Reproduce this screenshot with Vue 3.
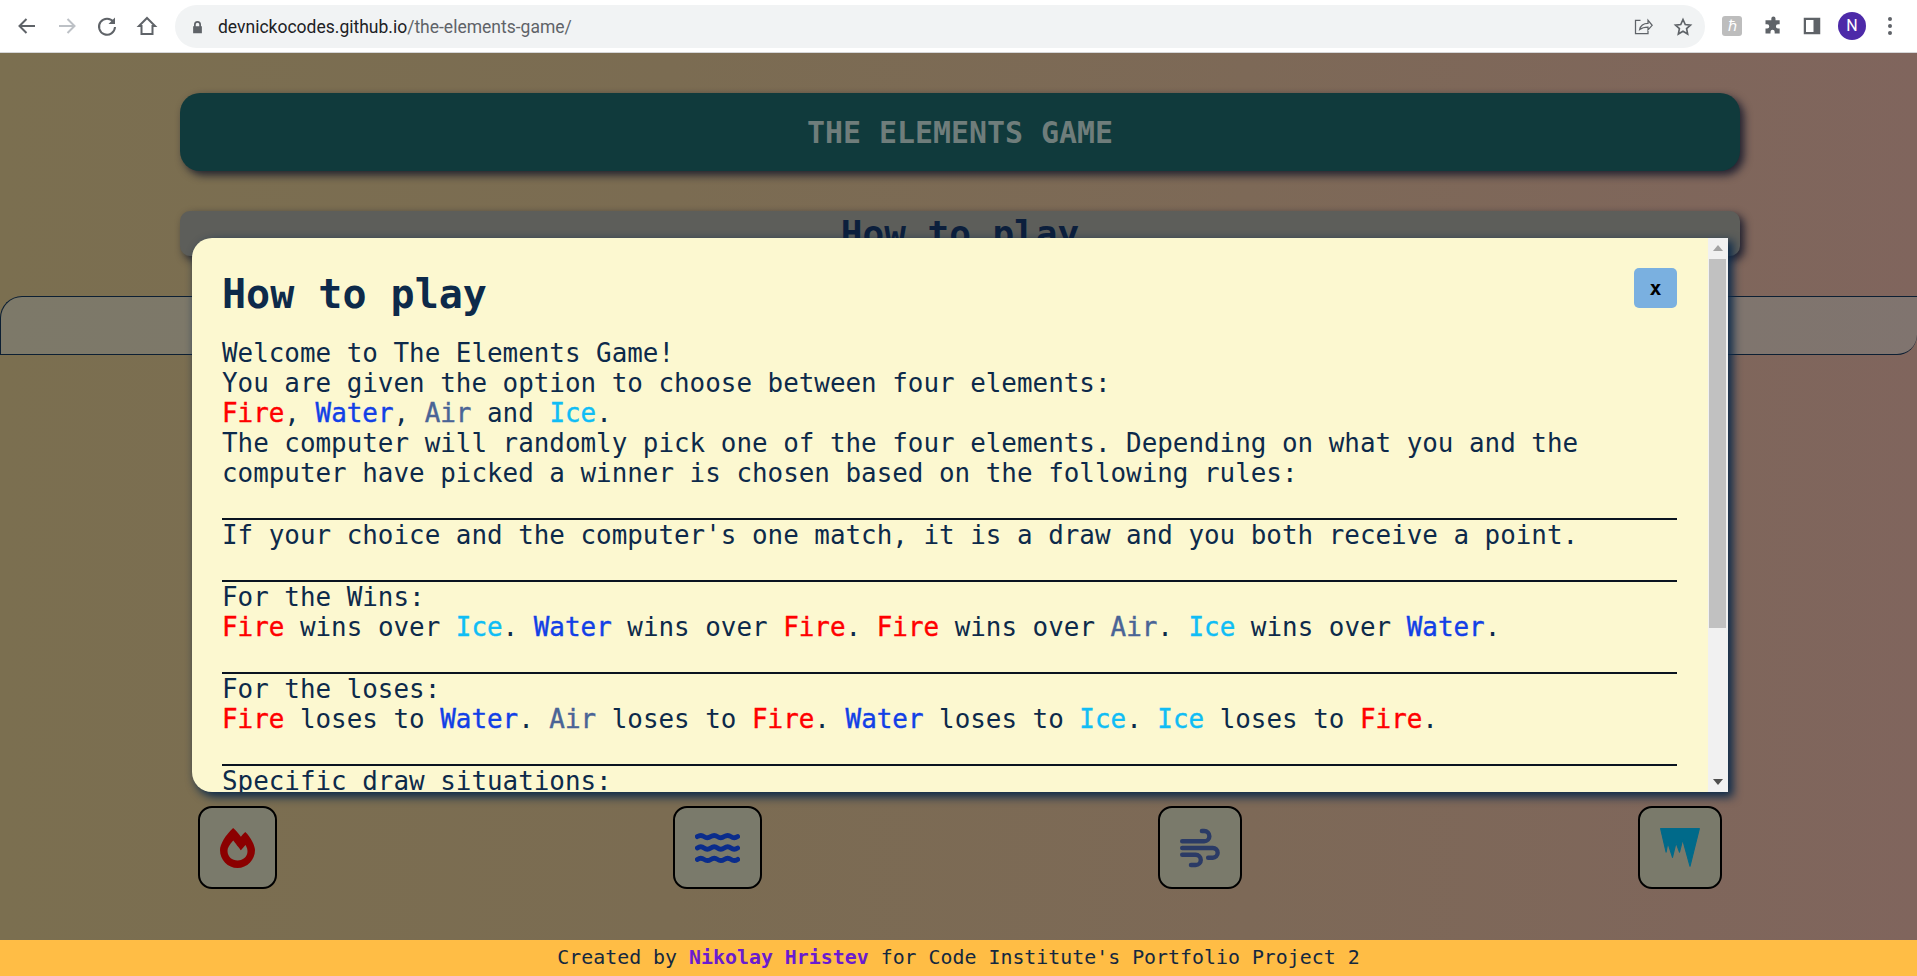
<script setup>
const choices = [
  { id: 'fire', vb: '0 0 448 512', w: 35 },
  { id: 'water', vb: '0 0 576 512', w: 45 },
  { id: 'air', vb: '0 0 512 512', w: 40 },
  { id: 'ice', vb: '0 0 512 512', w: 40 }
]
</script>

<template>
  <div class="browser">
    <div class="chrome">
      <div class="nav-icons">
        <svg class="nav-icon" viewBox="0 0 24 24"><path d="M20 12H5M11.500 5L4.500 12l7 7" /></svg>
        <svg class="nav-icon off" viewBox="0 0 24 24"><path d="M4 12h15M12.500 5l7 7-7 7" /></svg>
        <svg class="nav-icon" viewBox="0 0 24 24"><path d="M18.500 8A8 8 0 1 0 20 13" /><path class="fill" d="M20 3.500V10h-6.500z" /></svg>
        <svg class="nav-icon" viewBox="0 0 24 24"><path d="M12 4l8 8h-2.500v8h-11v-8H4z" /></svg>
      </div>
      <div class="omnibox">
        <svg class="lock" viewBox="0 0 12 16"><path d="M2 7V5a4 4 0 0 1 8 0v2h1v8H1V7zm2 0h4V5a2 2 0 0 0-4 0z" /></svg>
        <span class="url">devnickocodes.github.io<span class="url-path">/the-elements-game/</span></span>
        <svg class="omni-icon share" viewBox="0 0 24 24"><path d="M9 4H3v16h15v-5M8 15c1-5 5-7.500 10-7.500V4l5 6-5 5.500V12c-4 0-7 .5-10 3z" /></svg>
        <svg class="omni-icon" viewBox="0 0 24 24"><path d="M12 3l2.700 6 6.300.7-4.700 4.300 1.300 6.500-5.600-3.300-5.600 3.300L7.700 14 3 9.700 9.300 9z" /></svg>
      </div>
      <div class="ext-icons">
        <div class="ext-badge">ℏ</div>
        <svg class="ext-icon" viewBox="0 0 24 24"><path d="M10 3a2.500 2.500 0 0 1 5 0v2h5v5h-2a2.500 2.500 0 0 0 0 5h2v6h-6v-2a2.500 2.500 0 0 0-5 0v2H3v-6h2a2.500 2.500 0 0 0 0-5H3V5h7z" /></svg>
        <svg class="ext-icon" viewBox="0 0 24 24"><path fill-rule="evenodd" d="M1 1h22v22H1zm3 3v16h10V4z" /></svg>
        <div class="avatar">N</div>
        <div class="menu-dots"><i></i><i></i><i></i></div>
      </div>
    </div>

    <div class="page">
      <header class="title-bar"><h1>THE ELEMENTS GAME</h1></header>
      <div class="how-bar"><h2>How to play</h2></div>
      <div class="band"></div>

      <div class="choices">
        <button v-for="c in choices" :key="c.id" class="choice">
          <svg :viewBox="c.vb" :width="c.w" height="40">
            <path v-if="c.id === 'fire'" fill="#8b0000" d="M323.56 51.2c-20.8 19.3-39.58 39.59-56.22 59.97C240.08 73.62 206.28 35.53 168 0 69.74 91.17 0 209.96 0 281.6 0 408.85 100.29 512 224 512s224-103.15 224-230.4c0-53.27-51.98-163.14-124.44-230.4zm-19.47 340.65C282.43 407.01 255.72 416 226.86 416 154.71 416 96 368.26 96 290.75c0-38.61 24.31-72.63 72.79-130.75 6.93 7.98 98.83 125.34 98.83 125.34l58.63-66.88c4.14 6.85 7.91 13.55 11.27 19.97 27.35 52.19 15.81 118.97-33.43 153.42z" />
            <g v-else-if="c.id === 'water'" fill="none" stroke="#0a2c8c" stroke-width="62" stroke-linecap="round">
              <path d="M30 110q45 -30 86 0t86 0t86 0t86 0t86 0t86 0" />
              <path d="M30 256q45 -30 86 0t86 0t86 0t86 0t86 0t86 0" />
              <path d="M30 402q45 -30 86 0t86 0t86 0t86 0t86 0t86 0" />
            </g>
            <g v-else-if="c.id === 'air'" fill="none" stroke="#2b3b66" stroke-width="56" stroke-linecap="round" stroke-linejoin="round">
              <path d="M28 170H310a66 66 0 0 0 0-132h-30" />
              <path d="M28 256H420a62 62 0 0 1 0 124h-60" />
              <path d="M28 342H200a66 66 0 0 1 0 132h-60" />
            </g>
            <path v-else fill="#006a8a" stroke="#006a8a" stroke-width="14" stroke-linejoin="round" d="M8 8H504L384 490 290 150 250 310 205 190 160 376 100 190 78 310z" />
          </svg>
        </button>
      </div>

      <footer class="credits">
        Created by <strong>Nikolay Hristev</strong> for Code Institute's Portfolio Project 2
      </footer>

      <div class="modal">
        <div class="modal-body">
          <div class="modal-head">
            <h2>How to play</h2>
            <button class="close">x</button>
          </div>
          <p>
            Welcome to The Elements Game!<br>
            You are given the option to choose between four elements:<br>
            <b class="fire">Fire</b>, <b class="water">Water</b>, <b class="air">Air</b> and <b class="ice">Ice</b>.<br>
            The computer will randomly pick one of the four elements. Depending on what you and the computer have picked a winner is chosen based on the following rules:
          </p>
          <hr>
          <p>If your choice and the computer's one match, it is a draw and you both receive a point.</p>
          <hr>
          <p>
            For the Wins:<br>
            <b class="fire">Fire</b> wins over <b class="ice">Ice</b>. <b class="water">Water</b> wins over <b class="fire">Fire</b>. <b class="fire">Fire</b> wins over <b class="air">Air</b>. <b class="ice">Ice</b> wins over <b class="water">Water</b>.
          </p>
          <hr>
          <p>
            For the loses:<br>
            <b class="fire">Fire</b> loses to <b class="water">Water</b>. <b class="air">Air</b> loses to <b class="fire">Fire</b>. <b class="water">Water</b> loses to <b class="ice">Ice</b>. <b class="ice">Ice</b> loses to <b class="fire">Fire</b>.
          </p>
          <hr>
          <p>Specific draw situations:</p>
        </div>
        <div class="scrollbar">
          <div class="arrow arrow-up"></div>
          <div class="track"><div class="thumb"></div></div>
          <div class="arrow arrow-down"></div>
        </div>
      </div>
    </div>
  </div>
</template>

<style scoped>
.browser {
  width: 1917px;
  height: 976px;
  display: flex;
  flex-direction: column;
  overflow: hidden;
}

.chrome {
  height: 52px;
  flex-shrink: 0;
  box-sizing: content-box;
  background: #fff;
  border-bottom: 1px solid #d5d6d8;
  display: flex;
  align-items: center;
  font-family: Roboto, "Liberation Sans", sans-serif;
}

.nav-icons {
  display: flex;
  width: 175px;
  padding-left: 15px;
  box-sizing: border-box;
  gap: 16px;
}

.nav-icon {
  width: 24px;
  height: 24px;
  fill: none;
  stroke: #5f6368;
  stroke-width: 2;
}

.nav-icon.off {
  stroke: #bdc1c6;
}

.nav-icon .fill {
  fill: #5f6368;
  stroke: none;
}

.omnibox {
  width: 1530px;
  height: 43px;
  margin-top: 1px;
  border-radius: 22px;
  background: #f1f3f4;
  display: flex;
  align-items: center;
  padding-left: 17px;
  padding-right: 12px;
  box-sizing: border-box;
}

.lock {
  width: 11px;
  height: 14px;
  fill: #5f6368;
}

.url {
  margin-left: 15px;
  font-size: 17.5px;
  color: #202124;
  flex: 1;
}

.url-path {
  color: #5f6368;
}

.omni-icon {
  width: 20px;
  height: 20px;
  fill: none;
  stroke: #5f6368;
  stroke-width: 2;
  margin-left: 20px;
}

.omni-icon.share {
  stroke-width: 1.500;
}

.ext-icons {
  display: flex;
  align-items: center;
  margin-left: 17px;
}

.ext-badge {
  width: 20px;
  height: 20px;
  border-radius: 3px;
  background: #bdbdbd;
  color: #fff;
  font-size: 15px;
  line-height: 20px;
  text-align: center;
}

.ext-icon {
  width: 20px;
  height: 20px;
  margin-left: 21px;
  fill: #5f6368;
}

.ext-icon + .ext-icon {
  width: 18px;
  height: 18px;
  margin-left: 20px;
}

.avatar {
  width: 28px;
  height: 28px;
  margin-left: 17px;
  border-radius: 50%;
  background: #4d2aa8;
  color: #fff;
  font-size: 16px;
  line-height: 28px;
  text-align: center;
}

.menu-dots {
  margin-left: 22px;
  display: flex;
  flex-direction: column;
  gap: 3px;
}

.menu-dots i {
  width: 4px;
  height: 4px;
  border-radius: 50%;
  background: #5f6368;
}

.page {
  position: relative;
  flex: 1;
  display: flex;
  flex-direction: column;
  background: linear-gradient(90deg, #7b6f50 0%, #7b6c52 35%, #7d6957 65%, #80655d 100%);
  font-family: "DejaVu Sans Mono", "Liberation Mono", monospace;
  color: #0d2a4a;
}

.title-bar {
  margin: 40px 177px 0 180px;
  height: 78px;
  border-radius: 20px;
  background: #103a3c;
  box-shadow: 4px 4px 8px rgba(15, 20, 40, 0.85);
  display: flex;
  align-items: center;
  justify-content: center;
}

.title-bar h1 {
  margin: 0;
  font-size: 29.900px;
  color: #6f7d7b;
}

.how-bar {
  margin: 40px 177px 0 180px;
  height: 45px;
  border-radius: 10px;
  background: #5d5e5a;
  box-shadow: 4px 4px 8px rgba(15, 20, 40, 0.85);
  text-align: center;
}

.how-bar h2 {
  margin: 0;
  padding-top: 2px;
  font-size: 36px;
  line-height: 41px;
  color: #0c1f3c;
}

.band {
  margin-top: 40px;
  height: 59px;
  box-sizing: border-box;
  border: 1px solid #0c1f33;
  border-right: none;
  border-radius: 22px 0 20px 0;
  background: rgba(128, 130, 126, 0.55);
}

.choices {
  margin-top: auto;
  margin-bottom: 51px;
  padding: 0 195px 0 198px;
  display: flex;
  justify-content: space-between;
}

.choice {
  height: 83px;
  padding: 0 20px;
  border: 2px solid #000;
  border-radius: 14px;
  background: #7a7a6b;
  display: flex;
  align-items: center;
}

.credits {
  height: 36px;
  background: #ffbd45;
  font-size: 19.900px;
  line-height: 36px;
  text-align: center;
  color: #14283f;
}

.credits strong {
  color: #6a1bd0;
}

.modal {
  position: absolute;
  left: 192px;
  top: 185px;
  width: 1536px;
  height: 554px;
  display: flex;
  overflow: hidden;
  background: #fcf8d0;
  border-radius: 20px 0 0 20px;
  box-shadow: 4px 4px 10px 1px #0c2a4a;
}

.modal-body {
  flex: 1;
  overflow: hidden;
  padding: 30px 31px 30px 30px;
  font-size: 25.900px;
  line-height: 30px;
}

.scrollbar {
  width: 20px;
  flex-shrink: 0;
  display: flex;
  flex-direction: column;
  background: #f1f1f1;
}

.arrow {
  height: 20px;
  display: flex;
  align-items: center;
  justify-content: center;
}

.arrow::before {
  content: "";
  border-left: 5px solid transparent;
  border-right: 5px solid transparent;
}

.arrow-up::before {
  border-bottom: 6px solid #a3a3a3;
}

.arrow-down::before {
  border-top: 6px solid #505050;
}

.track {
  flex: 1;
}

.thumb {
  height: 369px;
  margin: 1px 2px 0 1px;
  background: #c1c1c1;
}

.modal-head {
  display: flex;
  justify-content: space-between;
  align-items: flex-start;
  margin-bottom: 20px;
}

.modal-head h2 {
  margin: 2px 0 0;
  font-size: 40px;
  line-height: 48px;
}

.close {
  width: 43px;
  height: 40px;
  border: none;
  border-radius: 5px;
  background: #7ab0e0;
  color: #000;
  font-family: inherit;
  font-size: 20px;
  font-weight: 700;
}

.modal p {
  margin: 0 0 30px;
}

.modal hr {
  margin: 0;
  border: none;
  border-top: 2px solid #0a1420;
}

.modal b {
  font-weight: 400;
  -webkit-text-stroke: 0.4px currentColor;
}

.fire { color: #ff0000; }
.water { color: #1240e6; }
.air { color: #4a6496; }
.ice { color: #10bdf5; }
</style>

<style>
html, body {
  margin: 0;
  overflow: hidden;
}
</style>
